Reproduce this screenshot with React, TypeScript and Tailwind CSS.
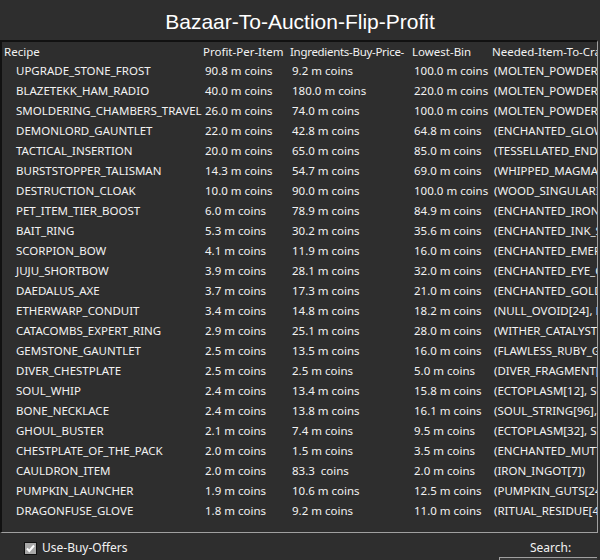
const ROWS: [string, string, string, string, string][] = [
  ['UPGRADE_STONE_FROST', '90.8 m coins', '9.2 m coins', '100.0 m coins', '(MOLTEN_POWDER[8], GLACITE_JEWEL[4])'],
  ['BLAZETEKK_HAM_RADIO', '40.0 m coins', '180.0 m coins', '220.0 m coins', '(MOLTEN_POWDER[16], FLAMING_HEART[1])'],
  ['SMOLDERING_CHAMBERS_TRAVEL', '26.0 m coins', '74.0 m coins', '100.0 m coins', '(MOLTEN_POWDER[12], TRAVEL_SCROLL[1])'],
  ['DEMONLORD_GAUNTLET', '22.0 m coins', '42.8 m coins', '64.8 m coins', '(ENCHANTED_GLOWSTONE[64])'],
  ['TACTICAL_INSERTION', '20.0 m coins', '65.0 m coins', '85.0 m coins', '(TESSELLATED_ENDER_PEARL[4])'],
  ['BURSTSTOPPER_TALISMAN', '14.3 m coins', '54.7 m coins', '69.0 m coins', '(WHIPPED_MAGMA_CREAM[8])'],
  ['DESTRUCTION_CLOAK', '10.0 m coins', '90.0 m coins', '100.0 m coins', '(WOOD_SINGULARITY[1])'],
  ['PET_ITEM_TIER_BOOST', '6.0 m coins', '78.9 m coins', '84.9 m coins', '(ENCHANTED_IRON_BLOCK[8])'],
  ['BAIT_RING', '5.3 m coins', '30.2 m coins', '35.6 m coins', '(ENCHANTED_INK_SACK[64])'],
  ['SCORPION_BOW', '4.1 m coins', '11.9 m coins', '16.0 m coins', '(ENCHANTED_EMERALD[64])'],
  ['JUJU_SHORTBOW', '3.9 m coins', '28.1 m coins', '32.0 m coins', '(ENCHANTED_EYE_OF_ENDER[32])'],
  ['DAEDALUS_AXE', '3.7 m coins', '17.3 m coins', '21.0 m coins', '(ENCHANTED_GOLD_BLOCK[16])'],
  ['ETHERWARP_CONDUIT', '3.4 m coins', '14.8 m coins', '18.2 m coins', '(NULL_OVOID[24], RARE_DIAMOND[1])'],
  ['CATACOMBS_EXPERT_RING', '2.9 m coins', '25.1 m coins', '28.0 m coins', '(WITHER_CATALYST[4])'],
  ['GEMSTONE_GAUNTLET', '2.5 m coins', '13.5 m coins', '16.0 m coins', '(FLAWLESS_RUBY_GEM[1])'],
  ['DIVER_CHESTPLATE', '2.5 m coins', '2.5 m coins', '5.0 m coins', '(DIVER_FRAGMENT[8])'],
  ['SOUL_WHIP', '2.4 m coins', '13.4 m coins', '15.8 m coins', '(ECTOPLASM[12], SOUL_STRING[8])'],
  ['BONE_NECKLACE', '2.4 m coins', '13.8 m coins', '16.1 m coins', '(SOUL_STRING[96], SPIRIT_BONE[4])'],
  ['GHOUL_BUSTER', '2.1 m coins', '7.4 m coins', '9.5 m coins', '(ECTOPLASM[32], SILVER_FANG[4])'],
  ['CHESTPLATE_OF_THE_PACK', '2.0 m coins', '1.5 m coins', '3.5 m coins', '(ENCHANTED_MUTTON[48])'],
  ['CAULDRON_ITEM', '2.0 m coins', '83.3  coins', '2.0 m coins', '(IRON_INGOT[7])'],
  ['PUMPKIN_LAUNCHER', '1.9 m coins', '10.6 m coins', '12.5 m coins', '(PUMPKIN_GUTS[24], ENCHANTED_PUMPKIN[8])'],
  ['DRAGONFUSE_GLOVE', '1.8 m coins', '9.2 m coins', '11.0 m coins', '(RITUAL_RESIDUE[4], DRAGON_CLAW[1])'],
]

function CheckIcon() {
  return (
    <svg width="13" height="13" viewBox="0 0 13 13" aria-hidden="true">
      <rect x="0.5" y="0.5" width="12" height="12" fill="#a8a8a8" stroke="#111" />
      <path d="M3 6.5L5.3 9L10 3.5" stroke="white" strokeWidth="2" fill="none" />
    </svg>
  )
}

export default function App() {
  return (
    <div
      className="w-[600px] h-[560px] bg-[#2e2e2e] text-[#f2f2f2] flex flex-col overflow-hidden"
      style={{ fontFamily: '"Noto Sans", "Open Sans", sans-serif' }}
    >
      {/* Title */}
      <div className="h-[40px] flex items-center justify-center pt-[4px]">
        <h1 className="text-[21px] text-white" style={{ fontFamily: '"Liberation Sans", Arial, sans-serif' }}>
          Bazaar-To-Auction-Flip-Profit
        </h1>
      </div>

      {/* Table frame */}
      <div className="w-[598px] h-[493px] border-t-2 border-l-2 border-t-[#111] border-l-[#111] border-r border-b border-r-[#a0a0a0] border-b-[#a0a0a0] overflow-hidden text-[11.5px]">
        <div className="h-[19px] flex items-center whitespace-nowrap">
          <div className="w-[200px] pl-[2px]">Recipe</div>
          <div className="w-[87px] pl-[1px]">Profit-Per-Item</div>
          <div className="w-[122px] pl-[1px] tracking-[-0.3px]">Ingredients-Buy-Price-</div>
          <div className="w-[80px] pl-[1px]">Lowest-Bin</div>
          <div className="flex-1 pl-[1px] overflow-hidden">Needed-Item-To-Craft</div>
        </div>
        {ROWS.map((r) => (
          <div key={r[0]} className="h-[20px] flex items-center whitespace-pre">
            <div className="w-[200px] pl-[14px] pr-[1px] overflow-hidden">{r[0]}</div>
            <div className="w-[87px] pl-[3px] pr-[2px] overflow-hidden">{r[1]}</div>
            <div className="w-[122px] pl-[3px] pr-[2px] overflow-hidden">{r[2]}</div>
            <div className="w-[80px] pl-[3px] pr-[2px] overflow-hidden">{r[3]}</div>
            <div className="flex-1 pl-[3px] overflow-hidden">{r[4]}</div>
          </div>
        ))}
      </div>

      {/* Bottom bar */}
      <div className="flex-1 relative text-[12px]">
        <label className="absolute left-[24px] top-[6px] flex items-center gap-[5px]">
          <CheckIcon />
          <span>Use-Buy-Offers</span>
        </label>
        <span className="absolute left-[530px] top-[6px]">Search:</span>
        <div className="absolute left-[499px] top-[24px] w-[98px] h-[10px] bg-[#3a3a3a] border-t border-l border-[#a0a0a0]" />
      </div>
    </div>
  )
}
